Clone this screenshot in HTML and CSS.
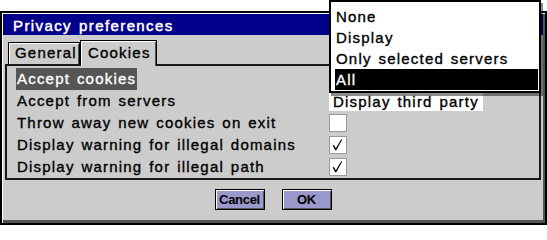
FILE: index.html
```html
<!DOCTYPE html>
<html>
<head>
<meta charset="utf-8">
<title>Privacy preferences</title>
<link rel="stylesheet" href="styles.css">
</head>
<body>
<div class="dialog">
  <div class="titlebar">Privacy preferences</div>
  <div class="tabs">
    <div class="tab tab-general">General</div>
    <div class="tab tab-cookies active">Cookies</div>
  </div>
  <div class="panel">
    <div class="row"><span class="label sel">Accept cookies</span><div class="field"></div></div>
    <div class="row"><span class="label">Accept from servers</span><div class="field">Display third party</div></div>
    <div class="row"><span class="label">Throw away new cookies on exit</span><span class="check"></span></div>
    <div class="row"><span class="label">Display warning for illegal domains</span><span class="check"><svg viewBox="0 0 18 18" width="16" height="16"><path d="M3 9.6 L4.4 9 L6.6 12.6 L12.6 2.4 L13.6 3 L7.1 15 L5.9 15 Z"/></svg></span></div>
    <div class="row"><span class="label">Display warning for illegal path</span><span class="check"><svg viewBox="0 0 18 18" width="16" height="16"><path d="M3 9.6 L4.4 9 L6.6 12.6 L12.6 2.4 L13.6 3 L7.1 15 L5.9 15 Z"/></svg></span></div>
  </div>
  <div class="buttons">
    <button class="btn">Cancel</button>
    <button class="btn">OK</button>
  </div>
</div>
<div class="menu">
  <div class="item">None</div>
  <div class="item">Display</div>
  <div class="item">Only selected servers</div>
  <div class="item current">All</div>
</div>
</body>
</html>
```

FILE: styles.css
```css
html, body {
  margin: 0;
  padding: 0;
  background: #ffffff;
}
body {
  width: 547px;
  height: 225px;
  overflow: hidden;
  position: relative;
  font-family: "Liberation Sans", Arial, sans-serif;
  font-size: 15px;
  letter-spacing: 1.2px;
  word-spacing: 1.5px;
  color: #000;
  -webkit-text-stroke: 0.35px currentColor;
}
.dialog {
  margin-top: 11px;
  width: 547px;
  height: 214px;
  box-sizing: border-box;
  border: 2px solid #000;
  background: #cccccc;
  box-shadow: inset 1px 1px 0 #ffffff, inset -2px -3px 0 #555555;
  display: flex;
  flex-direction: column;
}
.titlebar {
  margin: 1px 2px 0 1px;
  height: 21px;
  line-height: 23px;
  padding-left: 10px;
  background: #00008b;
  color: #ffffff;
  letter-spacing: 1.4px;
  -webkit-text-stroke: 0.5px currentColor;
  overflow: hidden;
}
.tabs {
  display: flex;
  align-items: flex-end;
  height: 29px;
  margin: 0 4px 0 3px;
  padding-left: 3px;
  position: relative;
  z-index: 1;
}
.tab {
  box-sizing: border-box;
  border: 1px solid #000;
  border-bottom: none;
  box-shadow: inset 1px 1px 0 #ffffff, inset -1px 0 0 #555555;
  background: #cccccc;
  line-height: 18px;
}
.tab-general {
  width: 72px;
  height: 22px;
  padding: 1px 0 0 6px;
}
.tab-cookies {
  width: 77px;
  height: 26px;
  margin-bottom: -2px;
  padding: 3px 0 0 7px;
}
.panel {
  margin: 0 4px 0 3px;
  height: 116px;
  box-sizing: border-box;
  border: 2px solid #1a1a1a;
  padding: 2px 0 0 9px;
}
.row {
  display: grid;
  grid-template-columns: 313px auto;
  align-items: center;
  height: 22px;
  line-height: 22px;
}
.label {
  justify-self: start;
  padding: 0 1px;
  white-space: nowrap;
}
.label.sel {
  background: #555555;
  color: #ffffff;
}
.field {
  width: 154px;
  height: 19px;
  line-height: 19px;
  box-sizing: border-box;
  padding-left: 4px;
  background: #ffffff;
  white-space: nowrap;
  overflow: hidden;
}
.check {
  width: 18px;
  height: 18px;
  box-sizing: border-box;
  border: 1px solid #9a9a9a;
  background: #ffffff;
  display: flex;
  align-items: center;
  justify-content: center;
}
.check svg {
  display: block;
  fill: #000;
}
.buttons {
  display: flex;
  justify-content: center;
  gap: 17px;
  padding-top: 9px;
  padding-right: 1px;
}
.btn {
  width: 50px;
  height: 21px;
  box-sizing: border-box;
  margin: 0;
  padding: 0;
  border: 1px solid #000;
  background: #9999cc;
  box-shadow: inset 1px 1px 0 #ffffff, inset -1px -1px 0 #555555;
  font-family: "Liberation Sans", Arial, sans-serif;
  font-weight: bold;
  font-size: 13px;
  letter-spacing: -0.3px;
  color: #000;
  line-height: 18px;
  -webkit-text-stroke: 0;
}
.menu {
  position: absolute;
  left: 329px;
  top: 0;
  width: 212px;
  box-sizing: border-box;
  border: 2px solid #000;
  background: #ffffff;
  padding: 4px 1px 1px 4px;
  box-shadow: 2px 3px 0 rgba(0, 0, 0, 0.45);
  z-index: 5;
}
.item {
  height: 21px;
  line-height: 21px;
  padding-left: 1px;
  white-space: nowrap;
}
.item.current {
  background: #000;
  color: #fff;
}
```
